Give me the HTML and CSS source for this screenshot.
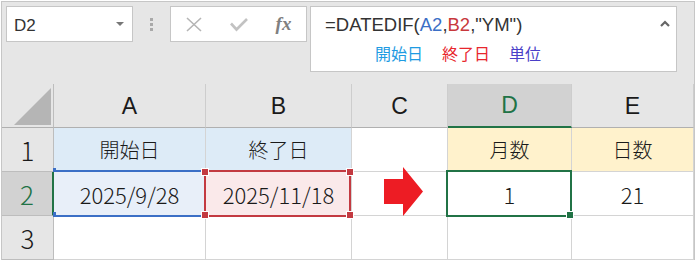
FILE: index.html
```html
<!DOCTYPE html>
<html lang="ja">
<head>
  <meta charset="UTF-8" />
  <meta name="viewport" content="width=device-width, initial-scale=1.0"/>
  <title>DATEDIF YM</title>
  <link rel="stylesheet" href="styles.css">
</head>
<body>

  <div class="app">
    <div class="toolbar">
      <div class="name-box">
        <span class="cell-ref">D2</span>
        <span class="drop"></span>
      </div>
      <div class="grip"><i></i><i></i><i></i></div>
      <div class="fx-buttons">
        <span class="fx-btn">
          <svg width="16" height="15" viewBox="0 0 16 15"><path d="M1 1 L15 14 M15 1 L1 14" stroke="#b5b5b5" stroke-width="1.6" fill="none"/></svg>
        </span>
        <span class="fx-btn">
          <svg width="18" height="15" viewBox="0 0 18 15"><path d="M1 6.5 L6.5 12.5 L17 2" stroke="#c2c2c2" stroke-width="2.6" fill="none"/></svg>
        </span>
        <span class="fx-btn fx">fx</span>
      </div>
      <div class="formula-box">
        <div class="formula-body">
          <div class="formula-text">=DATEDIF(<span class="ref-a">A2</span>,<span class="ref-b">B2</span>,"YM")</div>
          <div class="formula-notes">
            <span class="note-start">開始日</span>
            <span class="note-end">終了日</span>
            <span class="note-unit">単位</span>
          </div>
        </div>
        <svg class="collapse" width="10" height="7" viewBox="0 0 10 7"><path d="M1 6 L5 2 L9 6" stroke="#666" stroke-width="2.2" fill="none"/></svg>
      </div>
    </div>

    <div class="sheet">
      <div class="corner">
        <svg width="37" height="37" viewBox="0 0 37 37"><polygon points="37,0 37,37 0,37" fill="#b5b5b5"/></svg>
      </div>
      <div class="col-head">A</div>
      <div class="col-head">B</div>
      <div class="col-head">C</div>
      <div class="col-head active">D</div>
      <div class="col-head">E</div>

      <div class="row-head">1</div>
      <div class="cell label blue">開始日</div>
      <div class="cell label blue">終了日</div>
      <div class="cell"></div>
      <div class="cell label yellow">月数</div>
      <div class="cell label yellow">日数</div>

      <div class="row-head active">2</div>
      <div class="cell num start">2025/9/28</div>
      <div class="cell num end">2025/11/18</div>
      <div class="cell"></div>
      <div class="cell num">1</div>
      <div class="cell num">21</div>

      <div class="row-head">3</div>
      <div class="cell"></div>
      <div class="cell"></div>
      <div class="cell"></div>
      <div class="cell"></div>
      <div class="cell"></div>

      <!-- reference highlights and selection drawn over the grid -->
      <div class="sel sel-a"></div>
      <div class="sel sel-b"></div>
      <div class="sel sel-d"></div>
      <span class="knob blue k-a1"></span>
      <span class="knob blue k-a2"></span>
      <span class="knob red k-b1"></span>
      <span class="knob red k-b2"></span>
      <span class="knob red k-b3"></span>
      <span class="knob red k-b4"></span>
      <span class="knob green k-d"></span>
      <svg class="arrow" width="39" height="49" viewBox="0 0 39 49"><path d="M0 12 H19 V0 L39 24.5 L19 49 V37 H0 Z" fill="#ed1c24"/></svg>
    </div>
  </div>

</body>
</html>
```

FILE: styles.css
```css
body {
  margin: 0;
  background-color: #ffffff;
  font-family: "Liberation Sans", Arial, sans-serif;
  color: #222;
}
.app {
  width: 692px;
  margin: 1px 0 0 1px;
  border: 1px solid #c6c6c6;
  border-bottom: none;
  background-color: #e6e6e6;
}

/* formula bar */
.toolbar {
  height: 82px;
  box-sizing: border-box;
  padding: 4px 0 0 4px;
  display: flex;
  align-items: flex-start;
}
.name-box {
  width: 127px;
  height: 36px;
  box-sizing: border-box;
  border: 1px solid #c6c6c6;
  background-color: #ffffff;
  display: flex;
  align-items: center;
  justify-content: space-between;
  padding: 3px 8px 0 7px;
}
.cell-ref {
  font-size: 17px;
  color: #333;
}
.drop {
  width: 0;
  height: 0;
  border-left: 4px solid transparent;
  border-right: 4px solid transparent;
  border-top: 4px solid #777;
  margin-top: -3px;
}
.grip {
  width: 20px;
  height: 36px;
  margin-left: 8px;
  display: flex;
  flex-direction: column;
  align-items: center;
  justify-content: center;
  gap: 2px;
}
.grip i {
  width: 3px;
  height: 3px;
  background-color: #a9a9a9;
}
.fx-buttons {
  width: 137px;
  height: 36px;
  box-sizing: border-box;
  margin-left: 9px;
  border: 1px solid #c6c6c6;
  background-color: #ffffff;
  display: flex;
}
.fx-btn {
  width: 45px;
  display: flex;
  align-items: center;
  justify-content: center;
}
.fx {
  font-family: "Liberation Serif", "Times New Roman", serif;
  font-style: italic;
  font-weight: bold;
  font-size: 19px;
  color: #808080;
}
.formula-box {
  width: 367px;
  height: 66px;
  box-sizing: border-box;
  margin-left: 3px;
  border: 1px solid #c6c6c6;
  background-color: #ffffff;
  display: flex;
  align-items: flex-start;
}
.formula-body {
  padding: 7px 0 0 14px;
}
.formula-text {
  font-size: 18.5px;
  line-height: 22px;
  color: #333;
}
.ref-a {
  color: #3b6fc6;
}
.ref-b {
  color: #c8383c;
}
.formula-notes {
  margin-top: 7px;
  padding-left: 50px;
  display: flex;
  gap: 19px;
  font-family: "Noto Sans CJK JP", sans-serif;
  font-size: 16px;
  line-height: 20px;
}
.note-start {
  color: #1e9be2;
}
.note-end {
  color: #e8262d;
}
.note-unit {
  color: #4a3fc8;
}
.collapse {
  margin: 13px 6px 0 auto;
}

/* sheet grid */
.sheet {
  position: relative;
  display: grid;
  grid-template-columns: 52px 152px 146px 96px 124px 122px;
  grid-auto-rows: 44px;
  background-color: #ffffff;
}
.sheet > div {
  box-sizing: border-box;
  display: flex;
  align-items: center;
  justify-content: center;
}
.corner {
  background-color: #e6e6e6;
  border-right: 1px solid #bdbdbd;
  border-bottom: 1px solid #b0b0b0;
  justify-content: flex-end !important;
  align-items: flex-end !important;
  padding: 0 2px 2px 0;
}
.col-head {
  background-color: #e6e6e6;
  border-right: 1px solid #cdcdcd;
  border-bottom: 1px solid #b0b0b0;
  font-size: 23px;
  padding-top: 1px;
  color: #1a1a1a;
}
.col-head.active {
  background-color: #d2d2d2;
  border-bottom: 2px solid #217346;
  color: #217346;
}
.row-head {
  background-color: #e6e6e6;
  border-right: 1px solid #bdbdbd;
  border-bottom: 1px solid #bdbdbd;
  font-family: "Noto Sans CJK JP", sans-serif;
  font-weight: 300;
  font-size: 26px;
  color: #1a1a1a;
}
.row-head.active {
  background-color: #d2d2d2;
  border-right: 2px solid #217346;
  color: #217346;
}
.cell {
  border-right: 1px solid #d4d4d4;
  border-bottom: 1px solid #d4d4d4;
  font-family: "Noto Sans CJK JP", sans-serif;
  font-weight: 300;
  color: #1a1a1a;
}
.label {
  font-size: 20px;
}
.label.blue {
  background-color: #ddebf7;
}
.label.yellow {
  background-color: #fff2cc;
}
.num {
  font-size: 22px;
}
.num.start {
  background-color: #e8eff9;
}
.num.end {
  background-color: #fae9ea;
}

/* overlays */
.sel {
  position: absolute;
  box-sizing: border-box;
  top: 86px;
  height: 47px;
}
.sel-a {
  left: 51px;
  width: 153px;
  border-top: 2px solid #3b6fc6;
  border-bottom: 2px solid #3b6fc6;
}
.sel-b {
  left: 202px;
  width: 147px;
  border: 2px solid #c33a41;
}
.sel-d {
  left: 444px;
  width: 126px;
  border: 2px solid #217346;
}
.knob {
  position: absolute;
  width: 6px;
  height: 6px;
  box-shadow: 0 0 0 1px #ffffff;
}
.knob.blue {
  width: 3px;
  height: 4px;
  background-color: #3b6fc6;
  box-shadow: none;
}
.knob.red {
  background-color: #c33a41;
}
.knob.green {
  background-color: #217346;
}
.k-a1 { left: 51px; top: 84px; }
.k-a2 { left: 51px; top: 128px; }
.k-b1 { left: 200px; top: 85px; }
.k-b2 { left: 345px; top: 85px; }
.k-b3 { left: 200px; top: 128px; }
.k-b4 { left: 345px; top: 128px; }
.k-d { left: 565px; top: 128px; }
.arrow {
  position: absolute;
  left: 382px;
  top: 83px;
}
```
